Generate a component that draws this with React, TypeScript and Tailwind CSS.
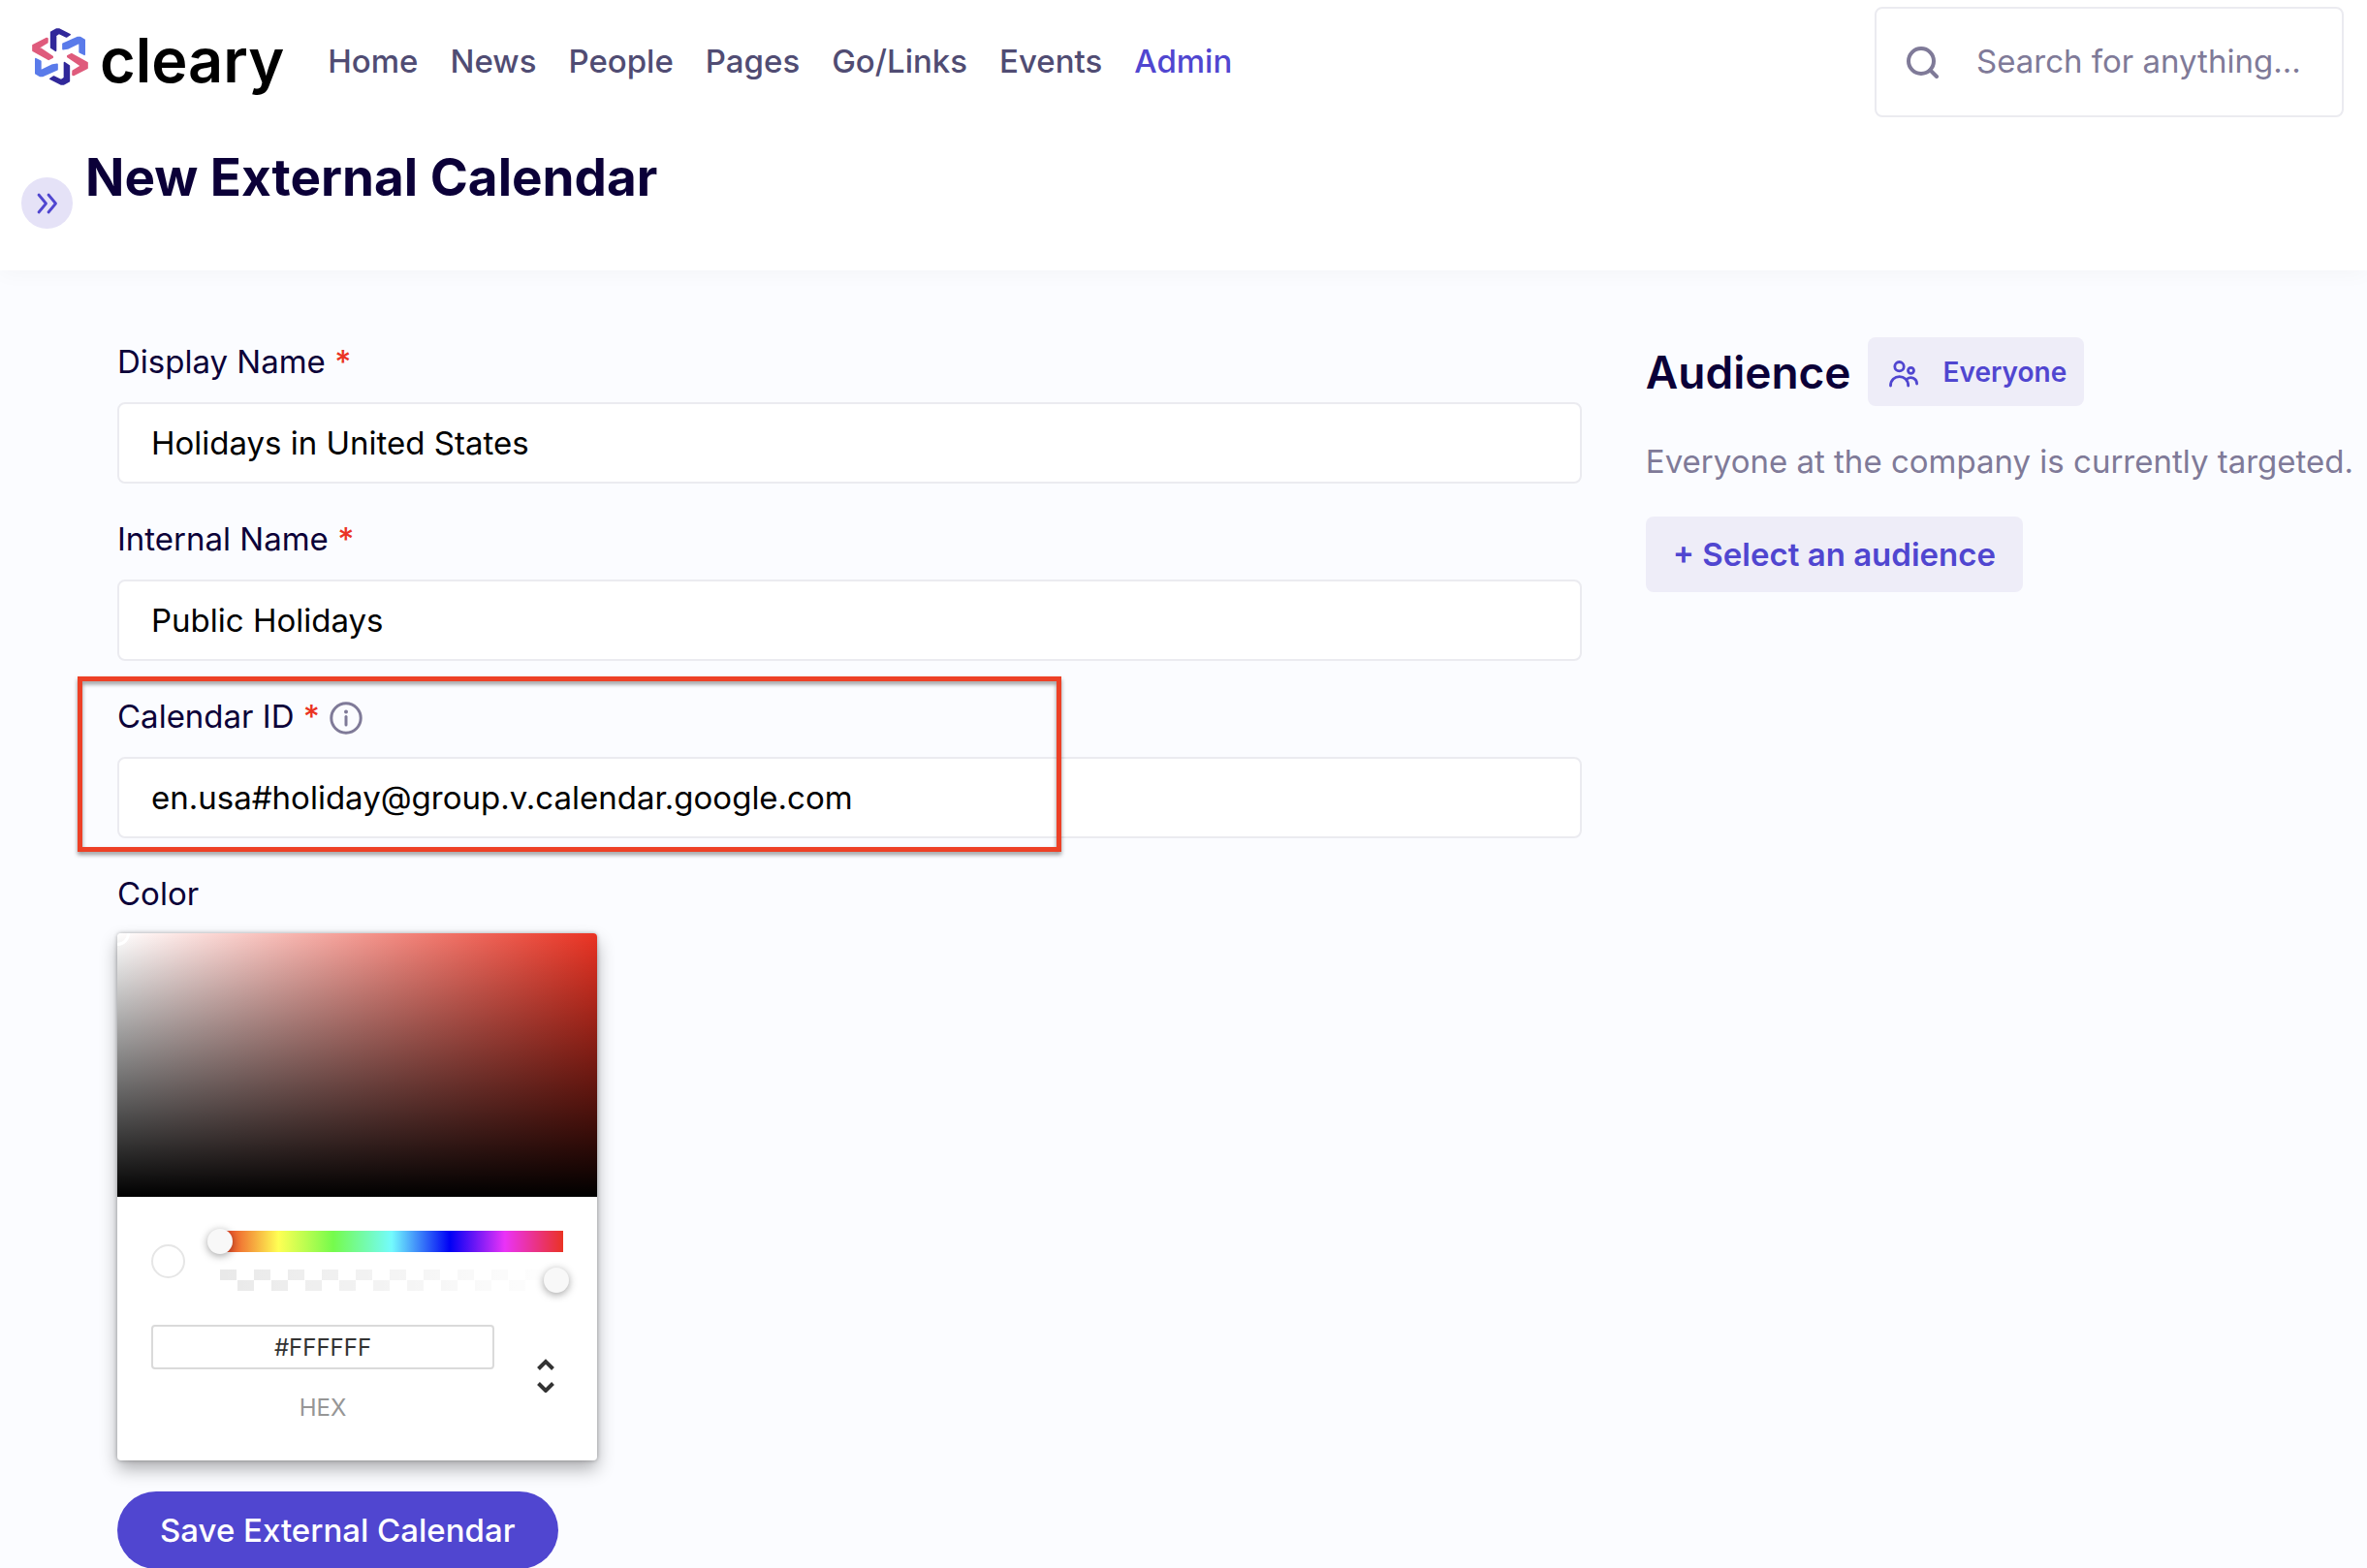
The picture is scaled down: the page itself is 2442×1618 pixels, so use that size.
import { useState } from "react";
import type { ReactNode } from "react";

const navLinks = ["Home", "News", "People", "Pages", "Go/Links", "Events", "Admin"];

function LogoMark() {
  return (
    <svg viewBox="39 27 173 177" className="mb-2 h-[59px] w-[58px]" aria-hidden="true">
      {[0, 180].map((angle) => (
        <g key={angle} transform={`rotate(${angle} 125.5 115.5)`} strokeWidth="5" strokeLinejoin="round">
          <path fill="#31289a" stroke="#31289a" d="M97.5 40 L115 30 L122 30 L156 47 L145 54 L122 43 L112 50 L112 97 L97.5 87 Z" />
          <path fill="#5a7bea" stroke="#5a7bea" d="M134.5 76 L180 55.5 L187 55.5 L201 64 L201 109 L186 101 L186 72 L149 90 L134.5 92 Z" />
          <path fill="#df5b7c" stroke="#df5b7c" d="M41.5 80 L84 58.5 L86.5 60 L86 71 L60 87 L102 115 L102 118 L90 124 L41.5 97 Z" />
        </g>
      ))}
    </svg>
  );
}

function SearchIcon() {
  return (
    <svg viewBox="0 0 34 34" className="size-[34px] shrink-0" fill="none" stroke="#7f7a98" strokeWidth="4" strokeLinecap="round" aria-hidden="true">
      <circle cx="15" cy="16" r="13" />
      <path d="M24.5 25.5 L31 32" />
    </svg>
  );
}

function PeopleIcon() {
  return (
    <svg viewBox="0 0 30 28" className="mt-1 h-7 w-[30px]" fill="none" stroke="currentColor" strokeWidth="2.8" strokeLinecap="round" aria-hidden="true">
      <circle cx="10.5" cy="6.2" r="4.7" />
      <circle cx="22.5" cy="10.3" r="3" />
      <path d="M1.5 26 C1.5 13.5 19.7 13.5 19.7 26" />
      <path d="M18.5 19 C22.5 16 28.6 18.5 28.6 24" />
    </svg>
  );
}

function InfoIcon() {
  return (
    <svg viewBox="0 0 34 34" className="mt-1 size-[34px]" fill="none" stroke="#7f7a98" strokeWidth="3" strokeLinecap="round" aria-hidden="true">
      <circle cx="17" cy="17" r="15.2" />
      <path d="M17 15.5 V24" />
      <circle cx="17" cy="10.5" r="2" fill="#7f7a98" stroke="none" />
    </svg>
  );
}

function Field({ id, label, initial, extra }: { id: string; label: string; initial: string; extra?: ReactNode }) {
  const [value, setValue] = useState(initial);
  return (
    <div className="flex flex-col gap-[17px]">
      <div className="flex items-center gap-2.5">
        <label htmlFor={id}>
          {label} <span className="font-medium text-[#ea3323]">*</span>
        </label>
        {extra}
      </div>
      <input
        id={id}
        type="text"
        value={value}
        onChange={(e) => setValue(e.target.value)}
        className="h-[84px] w-full rounded-lg border-2 border-[#ebebf0] bg-white px-[33px] text-black outline-none"
      />
    </div>
  );
}

const thumb =
  "absolute inset-y-0 -left-[13px] w-[373px] appearance-none bg-transparent [&::-webkit-slider-thumb]:size-[26px] [&::-webkit-slider-thumb]:appearance-none [&::-webkit-slider-thumb]:rounded-full [&::-webkit-slider-thumb]:bg-[#f8f8f8] [&::-webkit-slider-thumb]:shadow-[0_2px_8px_rgba(0,0,0,0.37)]";

function ColorPicker() {
  const [hex, setHex] = useState("#FFFFFF");
  return (
    <div className="w-[495px] rounded-sm bg-white shadow-[0_0_4px_rgba(0,0,0,0.3),0_9px_18px_rgba(0,0,0,0.3)]">
      {/* Saturation area */}
      <div className="relative h-[272px] overflow-hidden rounded-t-sm bg-[linear-gradient(to_top,#000,transparent),linear-gradient(to_right,#fff,#ea3323)]">
        <span className="absolute -left-[13px] -top-[13px] size-[26px] rounded-full border-3 border-white" />
      </div>

      <div className="px-[35px] pt-[35px] pb-9">
        <div className="flex items-center gap-9">
          <span className="size-[35px] rounded-full border-2 border-[#e6e6e6] bg-white" />
          <div className="flex flex-1 flex-col gap-[18px]">
            {/* Hue */}
            <div className="relative h-[22px] bg-[linear-gradient(to_right,#ea3323_0%,#ffff54_17%,#75fb4c_33%,#73fbfd_50%,#0000f5_67%,#ea33f7_83%,#ea3323_100%)]">
              <input type="range" aria-label="Hue" min="0" max="360" defaultValue="0" className={thumb} />
            </div>
            {/* Alpha */}
            <div className="relative h-[22px] bg-[linear-gradient(to_right,transparent,#fff),conic-gradient(#fff_25%,#e9e9e9_0_50%,#fff_0_75%,#e9e9e9_0)] bg-[size:100%_100%,35px_22px]">
              <input type="range" aria-label="Alpha" min="0" max="100" defaultValue="100" className={thumb} />
            </div>
          </div>
        </div>

        <div className="mt-[35px] flex items-center">
          <div className="flex w-[354px] flex-col items-center gap-[22px] text-2xl">
            <input
              id="hex"
              type="text"
              value={hex}
              onChange={(e) => setHex(e.target.value)}
              className="h-[46px] w-full rounded-sm border-2 border-[#dadada] text-center text-[#333333] outline-none"
            />
            <label htmlFor="hex" className="leading-9 text-[#969696]">
              HEX
            </label>
          </div>
          <button type="button" aria-label="Change color format" className="ml-11 text-[#333333]">
            <svg viewBox="0 0 18 36" className="h-9 w-[18px]" fill="none" stroke="currentColor" strokeWidth="4" aria-hidden="true">
              <path d="M1.5 11.5 L9 4 L16.5 11.5" />
              <path d="M1.5 26.5 L9 34 L16.5 26.5" />
            </svg>
          </button>
        </div>
      </div>
    </div>
  );
}

export default function App() {
  return (
    <div className="min-h-screen w-full bg-[#fbfcff] font-[Inter,sans-serif] text-[33px] leading-[50px] text-[#0b0038]">
      {/* Header */}
      <header className="bg-white pt-[7px] pb-[43px] shadow-[0_4px_20px_rgba(0,0,0,0.03)]">
        <div className="flex items-center pr-6 pl-[33px]">
          <a href="#" className="flex items-center gap-3 pb-1 text-black">
            <LogoMark />
            <span className="text-[63px] leading-[80px] font-semibold">cleary</span>
          </a>
          <nav className="ml-[45px] flex flex-1 gap-[33px] pb-0.5 font-medium text-[#504c73]">
            {navLinks.map((item) => (
              <a key={item} href="#" className={item === "Admin" ? "text-[#5046d0]" : ""}>
                {item}
              </a>
            ))}
          </nav>
          <label className="flex h-[114px] w-[484px] items-center gap-[38px] rounded-lg border-2 border-[#ebebf0] bg-white pl-[31px]">
            <SearchIcon />
            <input
              type="search"
              aria-label="Search"
              placeholder="Search for anything..."
              className="w-full min-w-0 pb-0.5 outline-none placeholder:text-[#7f7a98]"
            />
          </label>
        </div>

        <div className="mt-[30px] flex items-start gap-[13px] pl-[22px]">
          <button type="button" aria-label="Expand sidebar" className="mt-8 flex size-[53px] items-center justify-center rounded-full bg-[#e5e2f7] text-[#5046d0]">
            <svg viewBox="0 0 22 22" className="size-[22px]" fill="none" stroke="currentColor" strokeWidth="2.8" strokeLinecap="round" strokeLinejoin="round" aria-hidden="true">
              <path d="M2 2 L9.5 11 L2 20" />
              <path d="M12 2 L19.5 11 L12 20" />
            </svg>
          </button>
          <h1 className="text-[53px] leading-[64px] font-bold">New External Calendar</h1>
        </div>
      </header>

      <main className="grid grid-cols-[minmax(0,67fr)_minmax(0,33fr)] gap-[66px] pt-[69px] pl-[121px]">
        <form className="flex flex-col items-start gap-8" onSubmit={(e) => e.preventDefault()}>
          <div className="w-full">
            <Field id="display-name" label="Display Name" initial="Holidays in United States" />
          </div>
          <div className="w-full">
            <Field id="internal-name" label="Internal Name" initial="Public Holidays" />
          </div>
          <div className="relative w-full">
            <Field id="calendar-id" label="Calendar ID" initial="en.usa#holiday@group.v.calendar.google.com" extra={<InfoIcon />} />
            {/* Highlight around the calendar id */}
            <div className="pointer-events-none absolute -top-4 -left-[41px] h-[181px] w-[1015px] border-5 border-[#ed4026] drop-shadow-[0_3px_2px_rgba(0,0,0,0.4)]" />
          </div>
          <div className="flex flex-col gap-4">
            <span>Color</span>
            <ColorPicker />
          </div>
          <button type="submit" className="h-20 rounded-full bg-[#5046d0] px-11 font-medium text-white">
            Save External Calendar
          </button>
        </form>

        <aside className="flex flex-col items-start">
          <div className="flex items-center gap-[17px]">
            <h2 className="text-[46px] leading-[70px] font-semibold">Audience</h2>
            <span className="flex h-[71px] items-center gap-[26px] rounded-lg bg-[#eeedf8] pr-[18px] pl-[22px] text-[28px] font-semibold text-[#5046d0]">
              <PeopleIcon />
              Everyone
            </span>
          </div>
          <p className="mt-8 text-[#7f7a98]">Everyone at the company is currently targeted.</p>
          <button type="button" className="mt-8 h-[78px] rounded-lg bg-[#eeedf8] px-7 font-semibold text-[#5046d0]">
            + Select an audience
          </button>
        </aside>
      </main>
    </div>
  );
}
